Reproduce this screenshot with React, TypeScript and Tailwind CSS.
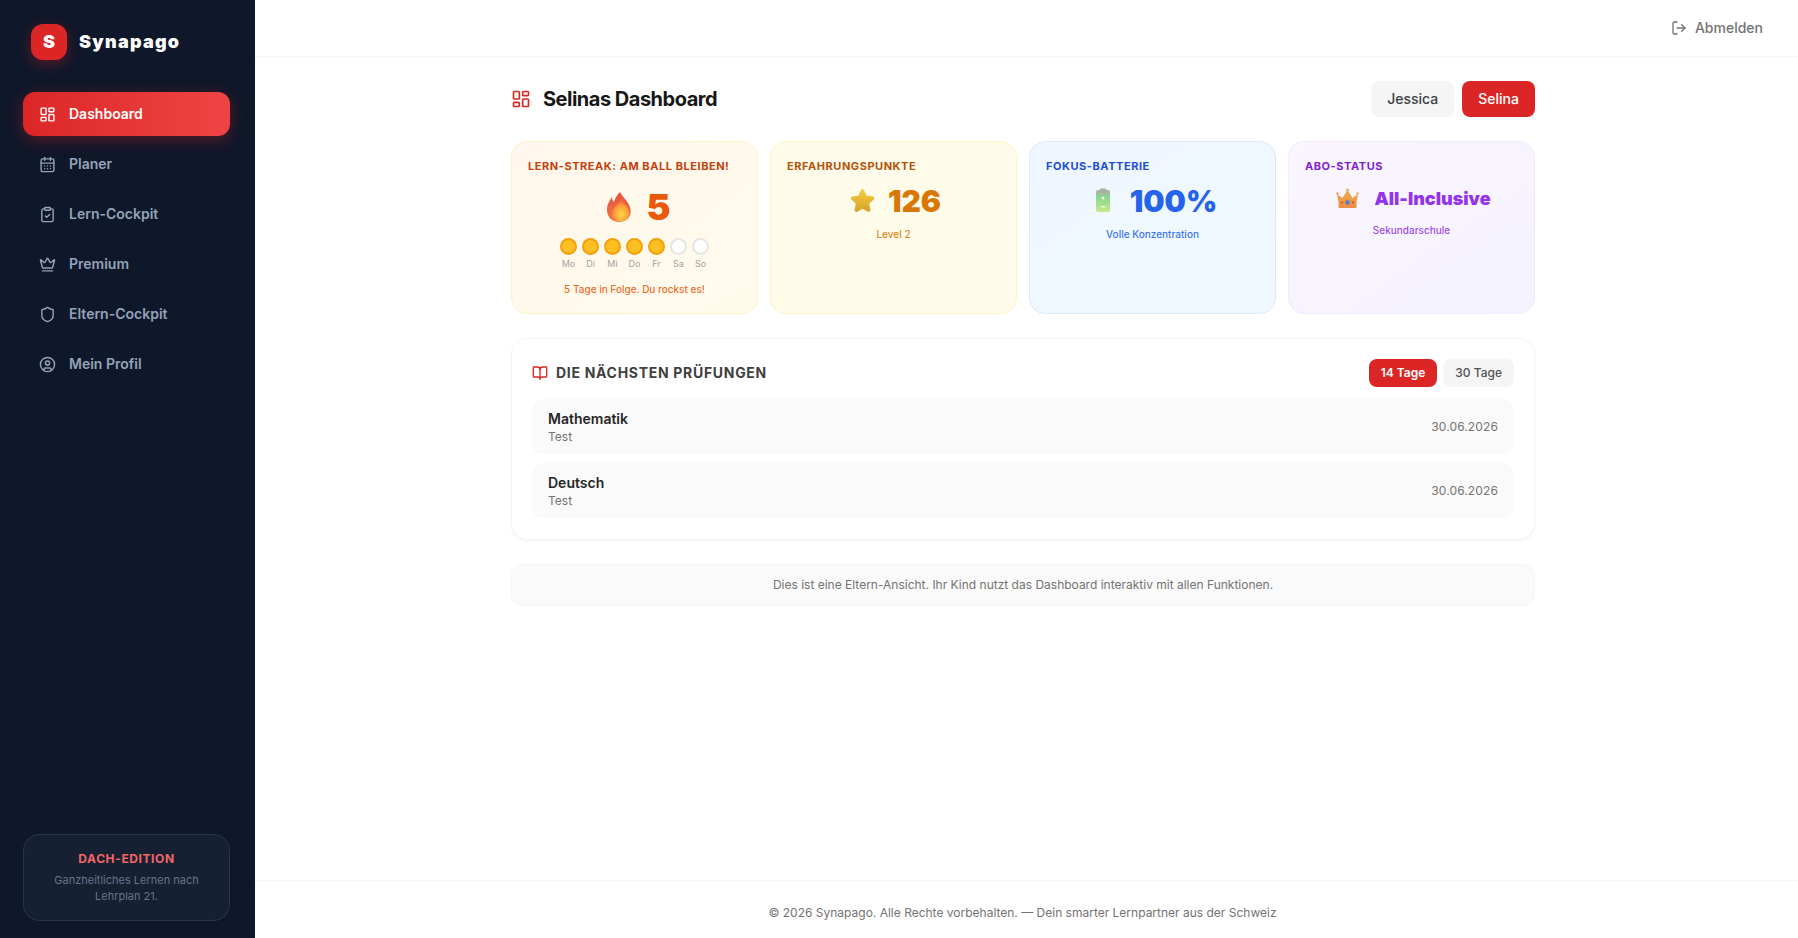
import {
  BookOpen,
  CalendarDays,
  CircleUser,
  ClipboardCheck,
  Crown,
  LayoutDashboard,
  LogOut,
  Shield,
} from 'lucide-react';

const navItems = [
  { label: 'Dashboard', icon: LayoutDashboard, active: true },
  { label: 'Planer', icon: CalendarDays },
  { label: 'Lern-Cockpit', icon: ClipboardCheck },
  { label: 'Premium', icon: Crown },
  { label: 'Eltern-Cockpit', icon: Shield },
  { label: 'Mein Profil', icon: CircleUser },
];

const days = [
  { label: 'Mo', done: true },
  { label: 'Di', done: true },
  { label: 'Mi', done: true },
  { label: 'Do', done: true },
  { label: 'Fr', done: true },
  { label: 'Sa', done: false },
  { label: 'So', done: false },
];

const exams = [
  { subject: 'Mathematik', type: 'Test', date: '30.06.2026' },
  { subject: 'Deutsch', type: 'Test', date: '30.06.2026' },
];

function FlameIcon() {
  return (
    <svg width="36" height="32" viewBox="-7 0 36 32">
      <defs>
        <linearGradient id="flameOuter" x1="0" y1="0" x2="0" y2="1">
          <stop offset="0" stopColor="#e9503a" />
          <stop offset="1" stopColor="#ee7a48" />
        </linearGradient>
        <radialGradient id="flameInner" cx="0.55" cy="0.68" r="0.62">
          <stop offset="0" stopColor="#fdd64a" />
          <stop offset="0.55" stopColor="#fca53c" />
          <stop offset="1" stopColor="#f4693a" />
        </radialGradient>
      </defs>
      <path d="M14 1C16 6 23 10 24.500 18 26 26 20 31 13 31 6 31 1 26 1 19 1 13 4 9 6 6 6 9 7 10 8 11 9 7 11 4 14 1z" fill="url(#flameOuter)" />
      <path d="M16 8C17 13 23.500 16 23.500 22.500 23.500 27.500 19 30.500 14 30.500 9 30.500 5.500 27 5.500 22 5.500 17 12 14 16 8z" fill="url(#flameInner)" />
    </svg>
  );
}

function StarIcon() {
  return (
    <svg width="30" height="26" viewBox="-3.500 0 30 26">
      <defs>
        <linearGradient id="starFill" x1="0" y1="0" x2="0" y2="1">
          <stop offset="0" stopColor="#f0cb3c" />
          <stop offset="1" stopColor="#d9a42e" />
        </linearGradient>
      </defs>
      <path
        d="M13 3l3 6.300 7 1-5.100 4.800 1.300 7-6.200-3.400-6.200 3.400 1.300-7L3 10.300l7-1z"
        fill="url(#starFill)"
        stroke="url(#starFill)"
        strokeWidth="3.500"
        strokeLinejoin="round"
      />
    </svg>
  );
}

function BatteryIcon() {
  return (
    <svg width="30" height="25" viewBox="-7 0 30 25">
      <defs>
        <linearGradient id="batteryFill" x1="0" y1="0" x2="0" y2="1">
          <stop offset="0" stopColor="#a9adaa" />
          <stop offset="0.14" stopColor="#a9b8a4" />
          <stop offset="0.28" stopColor="#86d58a" />
          <stop offset="1" stopColor="#c6e88c" />
        </linearGradient>
      </defs>
      <rect x="5" y="0.500" width="6" height="2" rx="1" fill="#a4a8a6" />
      <rect x="1" y="2" width="14" height="22" rx="2" fill="url(#batteryFill)" />
      <circle cx="8" cy="10" r="1.500" fill="#f2f7e8" />
      <rect x="6" y="18" width="4" height="1.500" fill="#f2f7e8" />
    </svg>
  );
}

function CrownIcon() {
  return (
    <svg width="30" height="21" viewBox="-4 0 30 21">
      <defs>
        <linearGradient id="crownFill" x1="0" y1="0" x2="0" y2="1">
          <stop offset="0" stopColor="#e8b04a" />
          <stop offset="1" stopColor="#ef8b45" />
        </linearGradient>
      </defs>
      <path d="M2.500 14L1 6l5.500 4 5-8 5 8 5.500-4-1.500 8v5a1 1 0 0 1-1 1h-16a1 1 0 0 1-1-1z" fill="url(#crownFill)" />
      <circle cx="1.500" cy="5.500" r="1.300" fill="#e2b04c" />
      <circle cx="11.500" cy="2" r="1.500" fill="#e2b04c" />
      <circle cx="21.500" cy="5.500" r="1.300" fill="#e2b04c" />
      <circle cx="11.500" cy="14.500" r="2.200" fill="#4f7fc4" />
      <circle cx="6" cy="14.500" r="1.100" fill="#c94a3c" />
      <circle cx="17" cy="14.500" r="1.100" fill="#c94a3c" />
    </svg>
  );
}

export default function App() {
  return (
    <div className="flex h-screen overflow-hidden bg-white font-['Inter',sans-serif]">
      <aside className="flex w-[255px] shrink-0 flex-col bg-[#0f172a] pb-[17px] pl-[23px] pr-[25px]">
        <div className="flex items-center gap-3 pl-2 pt-6">
          <div className="flex h-9 w-9 items-center justify-center rounded-xl bg-[#dc2626] text-lg font-black text-white shadow-[0_4px_14px_rgba(220,38,38,0.35)]">
            S
          </div>
          <span className="text-lg font-black tracking-[0.07em] text-white">Synapago</span>
        </div>

        <nav className="mt-8 flex flex-col gap-1.5">
          {navItems.map((item) => (
            <div
              key={item.label}
              className={
                item.active
                  ? 'flex h-11 items-center gap-[13px] rounded-xl bg-linear-to-r from-[#dc2626] to-[#ef4444] px-4 text-sm font-semibold text-white shadow-[0_4px_16px_rgba(220,38,38,0.35)]'
                  : 'flex h-11 items-center gap-[13px] rounded-xl px-4 text-sm font-semibold text-[#94a3b8]'
              }
            >
              <item.icon size={17} strokeWidth={2} />
              {item.label}
            </div>
          ))}
        </nav>

        <div className="mt-auto rounded-2xl border border-[#283548] bg-[#1e293b]/50 px-3 py-4 text-center">
          <p className="text-xs font-bold leading-4 tracking-wider text-[#f26666]">DACH-EDITION</p>
          <p className="mt-[5px] text-[11px] leading-4 text-[#64748b]">
            Ganzheitliches Lernen nach Lehrplan 21.
          </p>
        </div>
      </aside>

      <div className="flex min-w-0 flex-1 flex-col">
        <header className="flex h-[57px] shrink-0 items-center justify-end border-b border-neutral-100 pr-[35px]">
          <div className="flex items-center gap-2 text-sm font-medium text-neutral-500">
            <LogOut size={16} />
            Abmelden
          </div>
        </header>

        <main className="flex-1 pr-[7px] pt-6">
          <div className="mx-auto w-full max-w-5xl">
            <div className="flex items-center justify-between">
              <div className="flex items-center gap-3">
                <LayoutDashboard size={20} className="text-[#dc2626]" />
                <h1 className="text-xl font-bold tracking-tight text-neutral-900">Selinas Dashboard</h1>
              </div>
              <div className="flex gap-2">
                <button className="rounded-lg bg-neutral-100 px-4 py-2 text-sm font-medium text-neutral-700">
                  Jessica
                </button>
                <button className="rounded-lg bg-[#dc2626] px-4 py-2 text-sm font-medium text-white">
                  Selina
                </button>
              </div>
            </div>

            <div className="mt-6 grid h-[173px] grid-cols-4 gap-3">
              <div className="rounded-2xl border border-[#fef0c7] bg-linear-to-br from-[#fff7ed] to-[#fffbeb] p-4">
                <p className="text-[11px] font-bold tracking-wider text-[#c2410c]">LERN-STREAK: AM BALL BLEIBEN!</p>
                <div className="mt-3 flex items-center justify-center gap-3">
                  <FlameIcon />
                  <span className="text-4xl font-black leading-10 text-[#ea580c]">5</span>
                </div>
                <div className="mt-[11px] flex justify-center gap-[5px]">
                  {days.map((day) => (
                    <div key={day.label} className="flex w-[17px] flex-col items-center gap-[3px]">
                      <div
                        className={
                          day.done
                            ? 'h-[17px] w-[17px] rounded-full border-2 border-[#f59e0b] bg-[#fbbf24]'
                            : 'h-[17px] w-[17px] rounded-full border-2 border-neutral-200 bg-white'
                        }
                      />
                      <span className="text-[9px] leading-3 text-neutral-400">{day.label}</span>
                    </div>
                  ))}
                </div>
                <p className="mt-[11px] text-center text-[10px] font-medium leading-4 text-[#ea580c]/90">
                  5 Tage in Folge. Du rockst es!
                </p>
              </div>

              <div className="rounded-2xl border border-[#fef3c7] bg-linear-to-br from-[#fffbeb] to-[#fefce8] p-4">
                <p className="text-[11px] font-bold tracking-wider text-[#b45309]">ERFAHRUNGSPUNKTE</p>
                <div className="mt-1.5 flex items-center justify-center gap-3">
                  <StarIcon />
                  <span className="text-3xl font-black leading-10 text-[#d97706]">126</span>
                </div>
                <p className="mt-1.5 text-center text-[10px] font-medium text-[#d97706]/90">Level 2</p>
              </div>

              <div className="rounded-2xl border border-[#dbeafe] bg-linear-to-br from-[#eff6ff] to-[#f0f9ff] p-4">
                <p className="text-[11px] font-bold tracking-wider text-[#1d4ed8]">FOKUS-BATTERIE</p>
                <div className="mt-1.5 flex items-center justify-center gap-3">
                  <BatteryIcon />
                  <span className="text-3xl font-black leading-10 text-[#2563eb]">100%</span>
                </div>
                <p className="mt-1.5 text-center text-[10px] font-medium text-[#2563eb]/90">Volle Konzentration</p>
              </div>

              <div className="rounded-2xl border border-[#f3e8ff] bg-linear-to-br from-[#faf5ff] to-[#f5f3ff] p-4">
                <p className="text-[11px] font-bold tracking-wider text-[#7e22ce]">ABO-STATUS</p>
                <div className="mt-2 flex items-center justify-center gap-3">
                  <CrownIcon />
                  <span className="text-lg font-black leading-8 text-[#9333ea]">All-Inclusive</span>
                </div>
                <p className="mt-2 text-center text-[10px] font-medium text-[#9333ea]/90">Sekundarschule</p>
              </div>
            </div>

            <section className="mt-6 rounded-2xl border border-neutral-100 p-5 shadow-[0_1px_2px_rgba(0,0,0,0.05)]">
              <div className="flex items-center justify-between">
                <div className="flex items-center gap-2">
                  <BookOpen size={16} className="text-[#dc2626]" />
                  <h2 className="text-sm font-bold tracking-wider text-neutral-700">DIE NÄCHSTEN PRÜFUNGEN</h2>
                </div>
                <div className="flex gap-1.5">
                  <button className="rounded-lg bg-[#dc2626] px-3 py-1.5 text-xs font-semibold text-white">
                    14 Tage
                  </button>
                  <button className="rounded-lg bg-neutral-100 px-3 py-1.5 text-xs font-medium text-neutral-600">
                    30 Tage
                  </button>
                </div>
              </div>
              <div className="mt-3 flex flex-col gap-2">
                {exams.map((exam) => (
                  <div key={exam.subject} className="flex h-[56px] items-center justify-between rounded-xl bg-neutral-50 px-4">
                    <div>
                      <p className="text-sm font-semibold leading-5 text-neutral-800">{exam.subject}</p>
                      <p className="text-xs leading-4 text-neutral-500">{exam.type}</p>
                    </div>
                    <span className="text-xs tracking-[0.01em] text-neutral-500">{exam.date}</span>
                  </div>
                ))}
              </div>
            </section>

            <div className="mt-6 rounded-xl border border-neutral-100 bg-neutral-50 py-3 text-center text-xs text-neutral-500">
              Dies ist eine Eltern-Ansicht. Ihr Kind nutzt das Dashboard interaktiv mit allen Funktionen.
            </div>
          </div>
        </main>

        <footer className="flex h-[58px] shrink-0 items-center justify-center border-t border-neutral-100 pr-2 pt-1.5 text-xs text-neutral-500">
          © 2026 Synapago. Alle Rechte vorbehalten. — Dein smarter Lernpartner aus der Schweiz
        </footer>
      </div>
    </div>
  );
}
